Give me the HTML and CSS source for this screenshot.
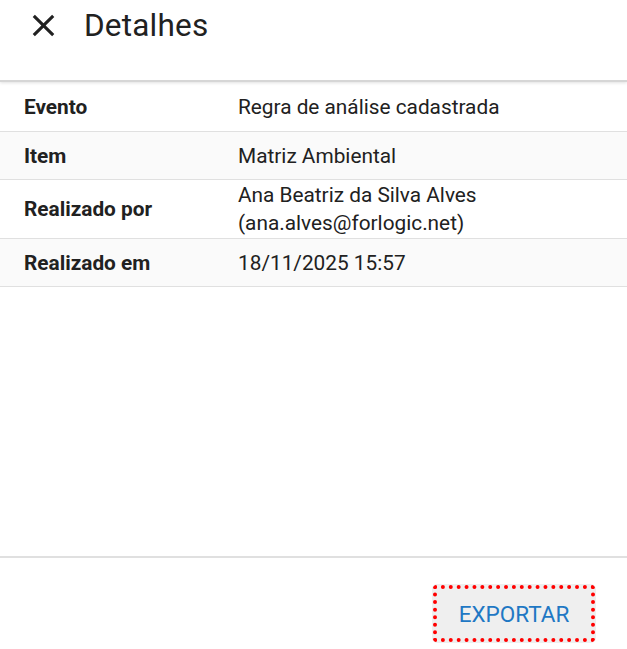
FILE: index.html
```html
<!DOCTYPE html>
<html lang="pt-BR">
  <head>
    <meta charset="UTF-8" />
    <meta name="viewport" content="width=device-width, initial-scale=1.0" />
    <title>Detalhes</title>
    <link rel="stylesheet" href="styles.css">
  </head>
  <body>
    <div class="dialog">
      <div class="dialog-header">
        <button class="close-button" aria-label="Fechar">
          <svg width="24" height="24" viewBox="0 0 24 24">
            <path d="M19 6.41 17.59 5 12 10.59 6.41 5 5 6.41 10.59 12 5 17.59 6.41 19 12 13.41 17.59 19 19 17.59 13.41 12z" fill="#212121" />
          </svg>
        </button>
        <h1 class="dialog-title">Detalhes</h1>
      </div>
      <div class="dialog-content">
        <div class="details-row">
          <div class="details-label">Evento</div>
          <div class="details-value">Regra de análise cadastrada</div>
        </div>
        <div class="details-row">
          <div class="details-label">Item</div>
          <div class="details-value">Matriz Ambiental</div>
        </div>
        <div class="details-row">
          <div class="details-label">Realizado por</div>
          <div class="details-value">Ana Beatriz da Silva Alves<br />(ana.alves@forlogic.net)</div>
        </div>
        <div class="details-row">
          <div class="details-label">Realizado em</div>
          <div class="details-value">18/11/2025 15:57</div>
        </div>
      </div>
      <div class="dialog-footer">
        <button class="export-button">EXPORTAR</button>
      </div>
    </div>
  </body>
</html>
```

FILE: styles.css
```css
body {
  margin: 0;
  font-family: Roboto, "Liberation Sans", sans-serif;
  color: #212121;
  background-color: #fff;
}
.dialog {
  display: flex;
  flex-direction: column;
  height: 100vh;
}
.dialog-header {
  display: flex;
  align-items: center;
  height: 50px;
  padding-bottom: 30px;
  border-bottom: 2px solid #d6d6d6;
  box-shadow: 0 1px 3px rgba(0, 0, 0, 0.12);
}
.close-button {
  display: flex;
  align-items: center;
  justify-content: center;
  margin-left: 23px;
  margin-right: 21px;
  padding: 0;
  width: 40px;
  height: 40px;
  border: none;
  background-color: transparent;
}
.close-button svg {
  width: 37px;
  height: 37px;
}
.dialog-title {
  margin: 0;
  font-size: 31.5px;
  font-weight: 400;
  letter-spacing: 0.2px;
}
.dialog-content {
  flex: 1;
}
.details-row {
  display: flex;
  align-items: center;
  min-height: 47px;
  border-bottom: 1px solid #e0e0e0;
  font-size: 20.8px;
  line-height: 28px;
}
.details-row:first-child {
  min-height: 49px;
}
.details-row:nth-child(even) {
  background-color: #fafafa;
}
.details-label {
  width: 214px;
  padding-left: 24px;
  font-weight: 700;
}
.details-value {
  flex: 1;
  padding: 1px 0;
  line-height: 28px;
}
.dialog-footer {
  display: flex;
  justify-content: flex-end;
  padding: 26px 31px 6px 0;
  border-top: 2px solid #e0e0e0;
}
.export-button {
  width: 164px;
  height: 59px;
  border: none;
  border-radius: 5px;
  background-color: #efefef;
  color: #1f78c4;
  font-family: Roboto, "Liberation Sans", sans-serif;
  font-size: 22.5px;
  outline: 4px dotted #f00;
  outline-offset: -5px;
}
```
